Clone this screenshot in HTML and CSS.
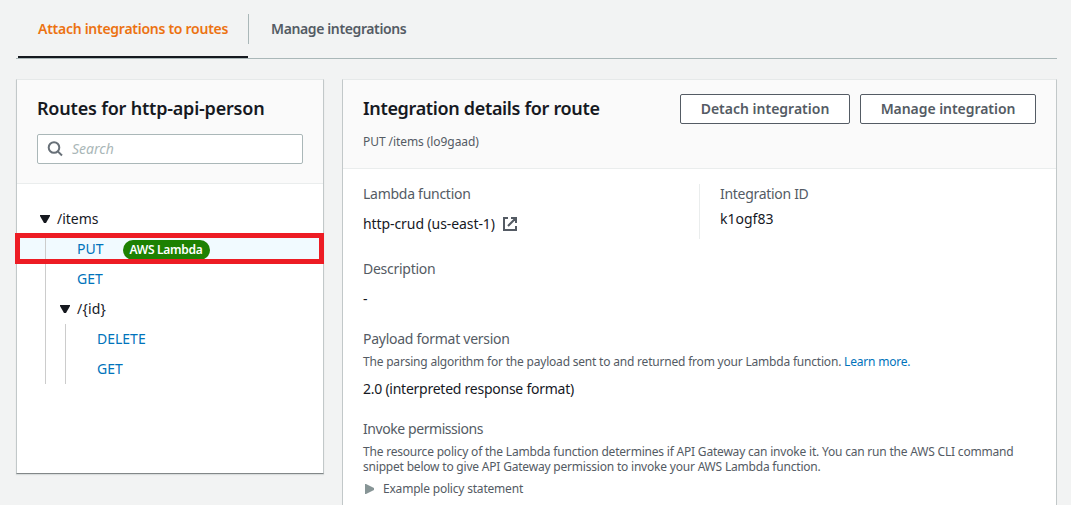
FILE: index.html
```html
<!DOCTYPE html>
<html lang="en">
<head>
<meta charset="utf-8">
<title>Integrations</title>
<link rel="stylesheet" href="styles.css">
</head>
<body>
<nav class="tabs">
  <a class="tab tab-active"><span>Attach integrations to routes</span></a>
  <a class="tab"><span>Manage integrations</span></a>
</nav>
<main class="columns">
  <section class="panel routes">
    <header class="routes-head">
      <h2>Routes for http-api-person</h2>
      <div class="search">
        <svg width="16" height="16" viewBox="0 0 16 16" fill="none" stroke="#687078" stroke-width="2"><circle cx="7" cy="6.5" r="5.3"/><path d="M10.8 10.4L15 14.5"/></svg>
        <span>Search</span>
      </div>
    </header>
    <div class="tree">
      <div class="node"><svg class="caret" width="10" height="8" viewBox="0 0 10 8"><path d="M0 0H10V1L6 8H4L0 1Z"/></svg><span>/items</span></div>
      <div class="branch">
        <div class="leaf selected"><a>PUT</a><span class="badge">AWS Lambda</span></div>
        <div class="leaf"><a>GET</a></div>
        <div class="node nested"><svg class="caret" width="10" height="8" viewBox="0 0 10 8"><path d="M0 0H10V1L6 8H4L0 1Z"/></svg><span>/{id}</span></div>
        <div class="branch inner">
          <div class="leaf"><a>DELETE</a></div>
          <div class="leaf"><a>GET</a></div>
        </div>
      </div>
    </div>
  </section>
  <section class="panel details">
    <header class="details-head">
      <div>
        <h2>Integration details for route</h2>
        <p class="small route-id">PUT /items (lo9gaad)</p>
      </div>
      <div class="actions">
        <button class="btn btn-detach">Detach integration</button>
        <button class="btn btn-manage">Manage integration</button>
      </div>
    </header>
    <div class="details-body">
      <div class="pair">
        <div class="pair-main">
          <p class="label">Lambda function</p>
          <p class="lambda-value"><span class="function-name">http-crud (us-east-1)</span><svg width="14" height="14" viewBox="0 0 14 14" fill="none" stroke="#545b64" stroke-width="2"><path d="M5 1H1V13H13V9M8 1H13V6M13 1L5 9"/></svg></p>
        </div>
        <div class="pair-side">
          <p class="label id-label">Integration ID</p>
          <p class="id-value">k1ogf83</p>
        </div>
      </div>
      <p class="label">Description</p>
      <p class="desc-value">-</p>
      <p class="label">Payload format version</p>
      <p class="small hint">The parsing algorithm for the payload sent to and returned from your Lambda function. <a>Learn more.</a></p>
      <p class="version">2.0 (interpreted response format)</p>
      <p class="label permissions-label">Invoke permissions</p>
      <p class="small hint"><span>The resource policy of the Lambda function determines if API Gateway can invoke it. You can run the AWS CLI command</span><br><span>snippet below to give API Gateway permission to invoke your AWS Lambda function.</span></p>
      <p class="small example"><svg width="9" height="10" viewBox="0 0 9 10"><path d="M0 0H1L9 4V6L1 10H0Z" fill="#879596"/></svg><span>Example policy statement</span></p>
    </div>
  </section>
</main>
</body>
</html>
```
FILE: styles.css
```css
*, *::before, *::after { box-sizing: border-box; }
body {
  margin: 0;
  height: 505px;
  overflow: hidden;
  padding: 0 14px 0 16px;
  background: #f2f3f3;
  color: #16191f;
  font: 14px/20px "Noto Sans", sans-serif;
}
h2, p { margin: 0; }
h2, span { white-space: nowrap; }
a { color: #0073bb; }

.tabs {
  display: flex;
  height: 59px;
  padding: 14px 0 0 2px;
  border-bottom: 1px solid #aab7b8;
}
.tab {
  height: 30px;
  padding: 5px 20px 0 22px;
  color: #545b64;
  font-weight: 600;
  letter-spacing: -0.38px;
}
.tab-active {
  width: 231px;
  padding-left: 20px;
  color: #ec7211;
  border-right: 1px solid #aab7b8;
  letter-spacing: -0.27px;
}
.tab-active::after {
  content: "";
  display: block;
  width: 230px;
  height: 2px;
  margin: 17px 0 0 -20px;
  background: #16191f;
}

.columns { display: flex; align-items: flex-start; gap: 18px; padding-top: 20px; }
.panel {
  background: #fff;
  border: 1px solid #c2c8c9;
  border-top-color: #e6e9e9;
}
h2 { font-size: 18px; line-height: 22px; font-weight: 600; letter-spacing: -0.2px; }

.routes { width: 308px; height: 395px; border-bottom-color: #828788; box-shadow: 0 1px 1px #d9dddd; }
.routes-head {
  height: 104px;
  padding: 17px 20px 0;
  background: #fafafa;
  border-bottom: 1px solid #eaeded;
}
.search {
  display: flex;
  align-items: center;
  gap: 9px;
  height: 30px;
  margin-top: 15px;
  padding-left: 9px;
  background: #fff;
  border: 1px solid #aab7b8;
  border-radius: 2px;
  color: #aab7b8;
  font-style: italic;
}

.tree { padding-top: 20px; }
.node { display: flex; align-items: center; gap: 7px; height: 30px; padding-left: 23px; }
.caret { fill: #16191f; }
.branch { position: relative; }
.branch::before {
  content: "";
  position: absolute;
  left: 28px;
  top: 0;
  bottom: 0;
  width: 1px;
  background: #ccc;
}
.leaf { display: flex; align-items: center; height: 30px; padding-left: 60px; }
.nested { padding-left: 43px; }
.nested span { letter-spacing: 0.2px; }
.inner::before { left: 48px; }
.inner .leaf { padding-left: 80px; }
.selected { background: #f1faff; }
.selected::after {
  content: "";
  position: absolute;
  left: -2px;
  top: -1px;
  width: 309px;
  height: 31px;
  border: 5px solid #ed1c24;
}
.badge {
  display: flex;
  align-items: center;
  justify-content: center;
  width: 87px;
  height: 20px;
  margin: 2px 0 0 19px;
  border-radius: 10px;
  background: #1d8102;
  color: #fff;
  font-size: 12px;
  font-weight: 600;
  letter-spacing: -0.3px;
}

.details { width: 715px; height: 440px; }
.details-head {
  display: flex;
  justify-content: space-between;
  height: 89px;
  padding: 14px 20px 0;
  background: #fafafa;
  border-bottom: 1px solid #eaeded;
}
.details-head h2 { margin-top: 3px; letter-spacing: -0.34px; }
.small { font-size: 12px; line-height: 15px; color: #545b64; letter-spacing: -0.2px; }
.route-id { margin-top: 15px; letter-spacing: -0.07px; }
.actions { display: flex; gap: 10px; }
.btn {
  height: 30px;
  padding: 0;
  background: #fff;
  border: 1px solid #545b64;
  border-radius: 2px;
  color: #545b64;
  font: 600 14px/20px "Noto Sans", sans-serif;
}
.btn-detach { width: 170px; }
.btn-manage { width: 176px; letter-spacing: -0.05px; }

.details-body { padding: 15px 20px 0; }
.pair { display: flex; height: 55px; margin-bottom: 20px; }
.pair-main { width: 337px; border-right: 1px solid #eaeded; }
.pair-side { padding-left: 20px; }
.label { color: #545b64; letter-spacing: -0.27px; }
.id-label { letter-spacing: -0.3px; }
.permissions-label { letter-spacing: -0.43px; }
.function-name { width: 132px; letter-spacing: -0.08px; }
.lambda-value { display: flex; align-items: center; gap: 8px; margin-top: 10px; }
.id-value { margin-top: 5px; }
.desc-value { margin: 10px 0 20px; }
.hint { margin-top: 5px; }
.version { margin: 10px 0 20px; letter-spacing: -0.25px; }
.example { display: flex; align-items: center; gap: 9px; margin-top: 7px; padding-left: 2px; }
```
